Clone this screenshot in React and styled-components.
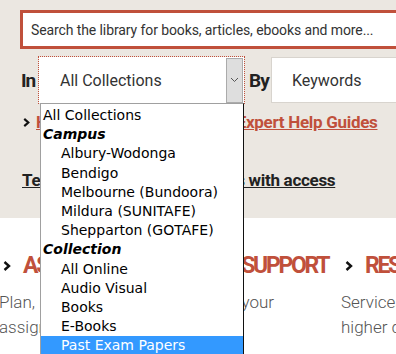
import React from "react"
import styled, { createGlobalStyle } from "styled-components"

const GlobalStyle = createGlobalStyle`
  html, body {
    margin: 0;
    padding: 0;
    background: #ffffff;
  }
  body {
    width: 396px;
    height: 354px;
    overflow: hidden;
    font-family: Roboto, "Liberation Sans", sans-serif;
  }
`

const colors = {
  beige: "#ebe7e1",
  red: "#c0503b",
  text: "#333333",
  muted: "#555555",
  highlight: "#3399ff",
}

const campuses = [
  "Albury-Wodonga",
  "Bendigo",
  "Melbourne (Bundoora)",
  "Mildura (SUNITAFE)",
  "Shepparton (GOTAFE)",
]

const collections = ["All Online", "Audio Visual", "Books", "E-Books", "Past Exam Papers"]

const Page = styled.div`
  position: relative;
  width: 396px;
  height: 354px;
  overflow: hidden;
`

const SearchPanel = styled.section`
  background: ${colors.beige};
  height: 218px;
  padding: 10px 0 0 20px;
  box-sizing: border-box;
`

const SearchBox = styled.div`
  box-sizing: border-box;
  width: 420px;
  height: 39px;
  border: 3px solid ${colors.red};
  background: #fff;
  display: flex;
  align-items: center;
  padding-left: 8px;
  font-size: 14px;
  letter-spacing: -0.1px;
  color: ${colors.text};
  white-space: nowrap;
`

const FilterRow = styled.div`
  display: flex;
  align-items: center;
  margin-top: 8px;
  height: 46px;
`

const FieldLabel = styled.span`
  font-weight: 700;
  font-size: 19px;
  color: #222;
  letter-spacing: -1px;
  width: ${(p) => p.$width}px;
  padding-left: ${(p) => p.$pad || 0}px;
  box-sizing: border-box;
`

const SelectWrap = styled.div`
  position: relative;
  width: 205px;
  height: 46px;
  box-sizing: border-box;
  outline: 1px dotted ${colors.red};
  background: #fff;
  display: flex;
  align-items: center;
`

const SelectValue = styled.span`
  flex: 1;
  padding-left: 21px;
  font-size: 16px;
  color: ${colors.text};
`

const ArrowButton = styled.span`
  width: 17px;
  height: 45px;
  box-sizing: border-box;
  background: #dedede;
  border: 1px solid #ababab;
  display: flex;
  align-items: center;
  justify-content: center;
  margin-right: 1px;
`

const TextField = styled.div`
  flex: 1;
  height: 46px;
  box-sizing: border-box;
  background: #fff;
  border: 1px solid #d8d4ce;
  border-right: none;
  display: flex;
  align-items: center;
  padding-left: 20px;
  font-size: 16px;
  color: ${colors.text};
`

const Links = styled.ul`
  list-style: none;
  margin: 0;
  padding: 0 0 0 2px;
`

const LinkItem = styled.li`
  display: flex;
  align-items: center;
  gap: 5px;
  height: 20px;
  margin-top: ${(p) => p.$top}px;
  white-space: nowrap;

  svg {
    flex-shrink: 0;
  }
`

const Anchor = styled.a`
  font-size: 17px;
  font-weight: 700;
  letter-spacing: -0.3px;
  color: ${(p) => (p.$red ? colors.red : "#222")};
  text-decoration: underline;
`

const Columns = styled.section`
  display: grid;
  grid-template-columns: 342px 200px;
  margin-left: -1px;
  padding-top: 34px;
`

const Column = styled.div`
  min-width: 0;
`

const Heading = styled.h3`
  margin: 0;
  display: flex;
  align-items: center;
  gap: 11px;
  font-size: 23px;
  font-weight: 700;
  letter-spacing: -2.3px;
  color: ${colors.red};
  white-space: nowrap;
  padding-left: 3px;

  svg {
    flex-shrink: 0;
  }
`

const Body = styled.p`
  margin: 11px 0 0;
  font-size: 17px;
  font-weight: 300;
  line-height: 25px;
  color: ${colors.muted};
  white-space: nowrap;
`

const Dropdown = styled.ul`
  position: absolute;
  left: 40px;
  top: 103px;
  width: 204px;
  height: 260px;
  box-sizing: border-box;
  margin: 0;
  padding: 2px 0 0;
  list-style: none;
  background: #fff;
  border: 1px solid #a0a0a0;
  border-right-color: #111;
  font-family: "DejaVu Sans", Verdana, sans-serif;
  font-size: 14px;
  color: #000;
`

const Option = styled.li`
  height: 19.2px;
  line-height: 19px;
  padding-left: ${(p) => (p.$indent ? 20 : 2)}px;
  background: ${(p) => (p.$selected ? colors.highlight : "transparent")};
  color: ${(p) => (p.$selected ? "#fff" : "#000")};
  white-space: nowrap;
`

const Group = styled.li`
  height: 19.2px;
  line-height: 19px;
  padding-left: 2px;
  font-weight: 700;
  font-style: italic;
`

const Chevron = ({ size = 9 }) => (
  <svg width={size} height={size} viewBox="0 0 10 10">
    <path d="M2.5 1 L7 5 L2.5 9" fill="none" stroke="#111" strokeWidth="2.4" />
  </svg>
)

const Caret = () => (
  <svg width="9" height="6" viewBox="0 0 9 6">
    <path d="M1 1 L4.5 4.5 L8 1" fill="none" stroke="#555" strokeWidth="1" />
  </svg>
)

export default function App() {
  return (
    <>
      <GlobalStyle />
      <Page>
        <SearchPanel>
          <SearchBox>Search the library for books, articles, ebooks and more...</SearchBox>
          <FilterRow>
            <FieldLabel $width={19} $pad={1}>In</FieldLabel>
            <SelectWrap>
              <SelectValue>All Collections</SelectValue>
              <ArrowButton>
                <Caret />
              </ArrowButton>
            </SelectWrap>
            <FieldLabel $width={27} $pad={5}>By</FieldLabel>
            <TextField>Keywords</TextField>
          </FilterRow>
          <Links>
            <LinkItem $top={9}>
              <Chevron />
              <Anchor $red href="#">Help with research: Library Expert Help Guides</Anchor>
            </LinkItem>
            <LinkItem $top={38}>
              <Anchor href="#">Terms of use for all databases with access</Anchor>
            </LinkItem>
          </Links>
        </SearchPanel>
        <Columns>
          <Column>
            <Heading>
              <Chevron size={10} />
              ASSIGNMENTS &amp; STUDY SUPPORT
            </Heading>
            <Body>
              Plan, research, outline, and write your
              <br />
              assignments with confidence
            </Body>
          </Column>
          <Column>
            <Heading>
              <Chevron size={10} />
              RESEARCH
            </Heading>
            <Body>
              Services for
              <br />
              higher degree
            </Body>
          </Column>
        </Columns>
        <Dropdown>
          <Option>All Collections</Option>
          <Group>Campus</Group>
          {campuses.map((c) => (
            <Option key={c} $indent>
              {c}
            </Option>
          ))}
          <Group>Collection</Group>
          {collections.map((c) => (
            <Option key={c} $indent $selected={c === "Past Exam Papers"}>
              {c}
            </Option>
          ))}
        </Dropdown>
      </Page>
    </>
  )
}
